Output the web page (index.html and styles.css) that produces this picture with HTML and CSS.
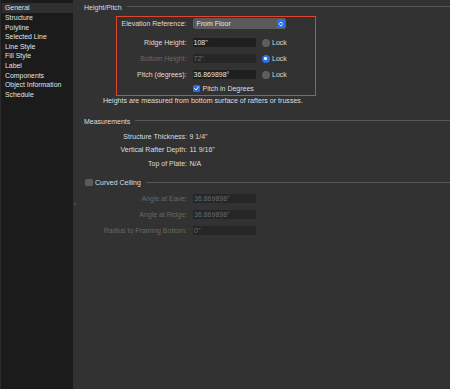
FILE: index.html
```html
<!DOCTYPE html>
<html>
<head>
<meta charset="utf-8">
<link rel="stylesheet" href="styles.css">
</head>
<body>
<div class="app">
  <nav class="sidebar">
    <div class="nav-item selected">General</div>
    <div class="nav-item">Structure</div>
    <div class="nav-item">Polyline</div>
    <div class="nav-item">Selected Line</div>
    <div class="nav-item">Line Style</div>
    <div class="nav-item">Fill Style</div>
    <div class="nav-item">Label</div>
    <div class="nav-item">Components</div>
    <div class="nav-item">Object Information</div>
    <div class="nav-item">Schedule</div>
  </nav>
  <main class="main">
    <span class="grip"></span>
    <div class="section-head"><span>Height/Pitch</span><i class="rule"></i></div>
    <div class="highlight">
      <div class="row row-select">
        <label class="lbl lbl-box">Elevation Reference:</label>
        <div class="select"><span>From Floor</span>
          <span class="sel-btn"><svg viewBox="0 0 8 8" width="8" height="8"><path d="M2.6 3.3 L4 2 L5.4 3.3 M2.6 4.7 L4 6 L5.4 4.7" fill="none" stroke="#fff" stroke-width="0.9" stroke-linecap="round" stroke-linejoin="round"/></svg></span>
        </div>
      </div>
      <div class="row r-ridge">
        <label class="lbl lbl-box">Ridge Height:</label>
        <div class="input">108"</div>
        <span class="radio"></span><span class="lock">Lock</span>
      </div>
      <div class="row r-field">
        <label class="lbl lbl-box dis">Bottom Height:</label>
        <div class="input dis">72"</div>
        <span class="radio on"></span><span class="lock">Lock</span>
      </div>
      <div class="row r-field">
        <label class="lbl lbl-box">Pitch (degrees):</label>
        <div class="input">36.869898°</div>
        <span class="radio"></span><span class="lock">Lock</span>
      </div>
      <div class="row r-check">
        <span class="lbl lbl-box"></span>
        <span class="check on"><svg viewBox="0 0 7 7" width="7" height="7"><path d="M1.6 3.6 L3 5 L5.5 1.9" fill="none" stroke="#fff" stroke-width="1" stroke-linecap="round" stroke-linejoin="round"/></svg></span>
        <span class="check-text">Pitch in Degrees</span>
      </div>
    </div>
    <div class="note">Heights are measured from bottom surface of rafters or trusses.</div>

    <div class="section-head sec-meas"><span>Measurements</span><i class="rule"></i></div>
    <div class="row r-m1"><span class="lbl">Structure Thickness:</span><span class="val">9 1/4"</span></div>
    <div class="row r-m2"><span class="lbl">Vertical Rafter Depth:</span><span class="val">11 9/16"</span></div>
    <div class="row r-m3"><span class="lbl">Top of Plate:</span><span class="val">N/A</span></div>

    <div class="section-head sec-curve"><span class="check off"></span><span class="curve-text">Curved Ceiling</span><i class="rule"></i></div>
    <div class="row r-c1"><span class="lbl dis">Angle at Eave:</span><div class="input dis">36.869898°</div></div>
    <div class="row r-c"><span class="lbl dis">Angle at Ridge:</span><div class="input dis">36.869898°</div></div>
    <div class="row r-c"><span class="lbl dis">Radius to Framing Bottom:</span><div class="input dis">0"</div></div>
  </main>
</div>
</body>
</html>
```

FILE: styles.css
```css
* { box-sizing: border-box; margin: 0; padding: 0; }
html, body { width: 450px; height: 389px; overflow: hidden; background: #323232; }
body {
  font-family: "Liberation Sans", Arial, sans-serif;
  font-size: 7px;
  color: #dedede;
}
.app { display: flex; height: 389px; }
.sidebar {
  width: 73px;
  flex: none;
  background: #1b1b1b;
  border-left: 1px solid #2b2b2b;
  padding-top: 3px;
  padding-left: 1px;
  font-size: 6.9px;
}
.nav-item {
  height: 9.6px;
  line-height: 9.6px;
  padding-left: 3px;
  white-space: nowrap;
  color: #e2e2e2;
}
.nav-item.selected { background: #303030; height: 10px; line-height: 10px; }

.main { flex: 1; position: relative; padding: 2px 0 0 11px; background: #323232; }
.grip {
  position: absolute; left: 1px; top: 203px;
  width: 2px; height: 2px; border-radius: 1px; background: #555;
}
.section-head { display: flex; align-items: center; height: 10px; white-space: nowrap; }
.rule { flex: 1; height: 1px; background: #575757; margin-left: 5px; margin-top: -1px; }

.highlight {
  margin-top: 4px;
  margin-left: 32px;
  width: 200px;
  border: 1.5px solid #e0452b;
  padding: 0.5px 0 1px 0;
}
.row { display: flex; align-items: center; height: 10px; white-space: nowrap; }
.lbl { width: 103px; text-align: right; flex: none; }
.lbl-box { width: 69.5px; }
.row-select { height: 12px; }
.dis { color: #686868; }

.select {
  margin-left: 6px;
  width: 93px; height: 11px;
  background: #5a5a5a;
  border-radius: 2.5px;
  display: flex; align-items: center; justify-content: space-between;
  padding: 0 1px 0 4px;
  color: #e8e8e8;
}
.sel-btn {
  width: 8px; height: 8.5px; border-radius: 2px; background: #2f6fe6;
  display: flex; align-items: center; justify-content: center;
}
.sel-btn svg { display: block; }

.input {
  margin-left: 6px;
  width: 63px; height: 9.5px;
  background: #1f1f1f;
  line-height: 9.5px;
  padding-left: 1px;
  color: #e4e4e4;
}
.input.dis { color: #6a6a6a; background: #262626; }
.radio {
  width: 8px; height: 8px; border-radius: 50%;
  background: #5e5e5e; margin-left: 6px; flex: none;
}
.radio.on { background: #2f6fe6; position: relative; }
.radio.on::after {
  content: ""; position: absolute; left: 2.75px; top: 2.75px;
  width: 2.5px; height: 2.5px; border-radius: 50%; background: #fff;
}
.lock { margin-left: 2.5px; color: #dcdcdc; }
.r-ridge { margin-top: 8px; }
.r-field { margin-top: 6px; }
.r-check { margin-top: 4px; }
.check {
  width: 7px; height: 7px; border-radius: 1.5px; flex: none; display: inline-block;
}
.check svg { display: block; }
.check.on { background: #2f6fe6; margin-left: 6.5px; }
.check.off { background: #5b5b5b; margin-left: 1px; width: 7.5px; height: 7.5px; }
.check-text { margin-left: 2.5px; }
.note { margin-top: 0.5px; padding-left: 19px; height: 10px; line-height: 10px; white-space: nowrap; font-size: 7.1px; }

.sec-meas { margin-top: 10px; }
.val { margin-left: 2.5px; }
.r-m1 { margin-top: 5px; }
.r-m2 { margin-top: 3.5px; }
.r-m3 { margin-top: 4px; }

.sec-curve { margin-top: 9px; }
.curve-text { margin-left: 2.5px; }
.r-c1 { margin-top: 6px; }
.r-c { margin-top: 6px; }
```
